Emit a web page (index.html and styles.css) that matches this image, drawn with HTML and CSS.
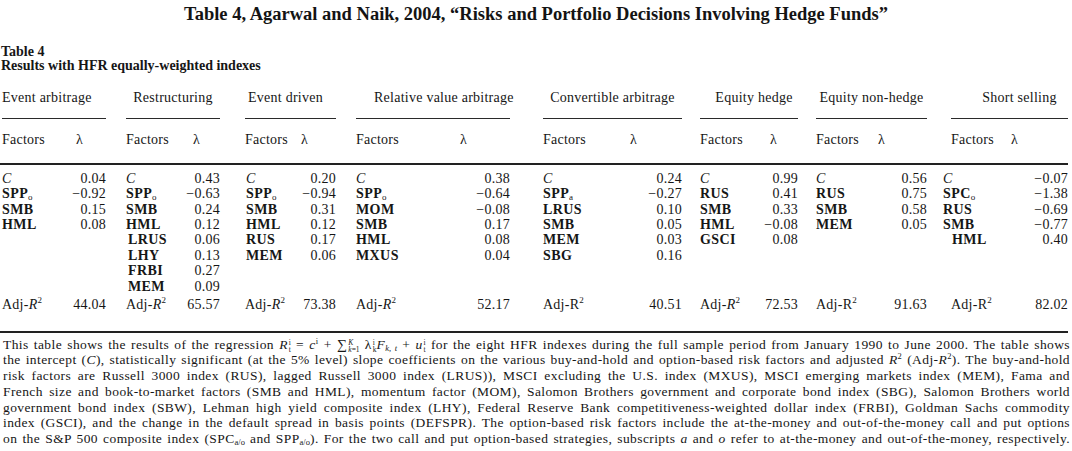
FILE: index.html
```html
<!DOCTYPE html>
<html lang="en">
<head>
<meta charset="utf-8">
<title>Table 4, Agarwal and Naik, 2004</title>
<link rel="stylesheet" href="styles.css">
</head>
<body>
<h1 class="title">Table 4, Agarwal and Naik, 2004, “Risks and Portfolio Decisions Involving Hedge Funds”</h1>

<div class="caption">
  <div>Table 4</div>
  <div>Results with HFR equally-weighted indexes</div>
</div>

<div class="table">
  <div class="group g1">
    <div class="head"><span>Event arbitrage</span></div>
    <div class="fhead"><span class="fl">Factors</span><span class="lam">λ</span></div>
    <div class="body">
      <div class="r"><i class="c">C</i><span>0.04</span></div>
      <div class="r"><b>SPP<sub>o</sub></b><span>−0.92</span></div>
      <div class="r"><b>SMB</b><span>0.15</span></div>
      <div class="r"><b>HML</b><span>0.08</span></div>
    </div>
    <div class="adj"><span>Adj-<i>R</i><sup>2</sup></span><span>44.04</span></div>
  </div>

  <div class="group g2">
    <div class="head"><span>Restructuring</span></div>
    <div class="fhead"><span class="fl">Factors</span><span class="lam">λ</span></div>
    <div class="body">
      <div class="r"><i class="c">C</i><span>0.43</span></div>
      <div class="r"><b>SPP<sub>o</sub></b><span>−0.63</span></div>
      <div class="r"><b>SMB</b><span>0.24</span></div>
      <div class="r"><b>HML</b><span>0.12</span></div>
      <div class="r"><b class="ind2">LRUS</b><span>0.06</span></div>
      <div class="r"><b class="ind2">LHY</b><span>0.13</span></div>
      <div class="r"><b class="ind2">FRBI</b><span>0.27</span></div>
      <div class="r"><b class="ind2">MEM</b><span>0.09</span></div>
    </div>
    <div class="adj"><span>Adj-<i>R</i><sup>2</sup></span><span>65.57</span></div>
  </div>

  <div class="group g3">
    <div class="head"><span>Event driven</span></div>
    <div class="fhead"><span class="fl">Factors</span><span class="lam">λ</span></div>
    <div class="body">
      <div class="r"><i class="c">C</i><span>0.20</span></div>
      <div class="r"><b>SPP<sub>o</sub></b><span>−0.94</span></div>
      <div class="r"><b>SMB</b><span>0.31</span></div>
      <div class="r"><b>HML</b><span>0.12</span></div>
      <div class="r"><b>RUS</b><span>0.17</span></div>
      <div class="r"><b>MEM</b><span>0.06</span></div>
    </div>
    <div class="adj"><span>Adj-<i>R</i><sup>2</sup></span><span>73.38</span></div>
  </div>

  <div class="group g4">
    <div class="head"><span>Relative value arbitrage</span></div>
    <div class="fhead"><span class="fl">Factors</span><span class="lam">λ</span></div>
    <div class="body">
      <div class="r"><i class="c">C</i><span>0.38</span></div>
      <div class="r"><b>SPP<sub>o</sub></b><span>−0.64</span></div>
      <div class="r"><b>MOM</b><span>−0.08</span></div>
      <div class="r"><b>SMB</b><span>0.17</span></div>
      <div class="r"><b>HML</b><span>0.08</span></div>
      <div class="r"><b>MXUS</b><span>0.04</span></div>
    </div>
    <div class="adj"><span>Adj-<i>R</i><sup>2</sup></span><span>52.17</span></div>
  </div>

  <div class="group g5">
    <div class="head"><span>Convertible arbitrage</span></div>
    <div class="fhead"><span class="fl">Factors</span><span class="lam">λ</span></div>
    <div class="body">
      <div class="r"><i class="c">C</i><span>0.24</span></div>
      <div class="r"><b>SPP<sub>a</sub></b><span>−0.27</span></div>
      <div class="r"><b>LRUS</b><span>0.10</span></div>
      <div class="r"><b>SMB</b><span>0.05</span></div>
      <div class="r"><b>MEM</b><span>0.03</span></div>
      <div class="r"><b>SBG</b><span>0.16</span></div>
    </div>
    <div class="adj"><span>Adj-R<sup>2</sup></span><span>40.51</span></div>
  </div>

  <div class="group g6">
    <div class="head"><span>Equity hedge</span></div>
    <div class="fhead"><span class="fl">Factors</span><span class="lam">λ</span></div>
    <div class="body">
      <div class="r"><i class="c">C</i><span>0.99</span></div>
      <div class="r"><b>RUS</b><span>0.41</span></div>
      <div class="r"><b>SMB</b><span>0.33</span></div>
      <div class="r"><b>HML</b><span>−0.08</span></div>
      <div class="r"><b>GSCI</b><span>0.08</span></div>
    </div>
    <div class="adj"><span>Adj-<i>R</i><sup>2</sup></span><span>72.53</span></div>
  </div>

  <div class="group g7">
    <div class="head"><span>Equity non-hedge</span></div>
    <div class="fhead"><span class="fl">Factors</span><span class="lam">λ</span></div>
    <div class="body">
      <div class="r"><i class="c">C</i><span>0.56</span></div>
      <div class="r"><b>RUS</b><span>0.75</span></div>
      <div class="r"><b>SMB</b><span>0.58</span></div>
      <div class="r"><b>MEM</b><span>0.05</span></div>
    </div>
    <div class="adj"><span>Adj-R<sup>2</sup></span><span>91.63</span></div>
  </div>

  <div class="group g8">
    <div class="head"><span>Short selling</span></div>
    <div class="fhead"><span class="fl">Factors</span><span class="lam">λ</span></div>
    <div class="body">
      <div class="r"><i class="c">C</i><span>−0.07</span></div>
      <div class="r"><b>SPC<sub>o</sub></b><span>−1.38</span></div>
      <div class="r"><b>RUS</b><span>−0.69</span></div>
      <div class="r"><b>SMB</b><span>−0.77</span></div>
      <div class="r"><b class="ind">HML</b><span>0.40</span></div>
    </div>
    <div class="adj"><span>Adj-R<sup>2</sup></span><span>82.02</span></div>
  </div>
</div>

<div class="notes">
  <p class="ln">This table shows the results of the regression <i>R</i><span class="ss"><span>i</span><span>t</span></span> = <i>c</i><sup class="up">i</sup> + <span class="sum">∑</span><span class="ss"><span><i>K</i></span><span><i>k</i>=1</span></span> λ<span class="ss"><span>i</span><span>k</span></span><i>F</i><sub class="dn"><i>k</i>, <i>t</i></sub> + <i>u</i><span class="ss"><span>i</span><span>t</span></span> for the eight HFR indexes during the full sample period from January 1990 to June 2000. The table shows</p>
  <p class="ln">the intercept (<i>C</i>), statistically significant (at the 5% level) slope coefficients on the various buy-and-hold and option-based risk factors and adjusted <i>R</i><sup class="up">2</sup> (Adj-<i>R</i><sup class="up">2</sup>). The buy-and-hold</p>
  <p class="ln">risk factors are Russell 3000 index (RUS), lagged Russell 3000 index (LRUS)), MSCI excluding the U.S. index (MXUS), MSCI emerging markets index (MEM), Fama and</p>
  <p class="ln">French size and book-to-market factors (SMB and HML), momentum factor (MOM), Salomon Brothers government and corporate bond index (SBG), Salomon Brothers world</p>
  <p class="ln">government bond index (SBW), Lehman high yield composite index (LHY), Federal Reserve Bank competitiveness-weighted dollar index (FRBI), Goldman Sachs commodity</p>
  <p class="ln">index (GSCI), and the change in the default spread in basis points (DEFSPR). The option-based risk factors include the at-the-money and out-of-the-money call and put options</p>
  <p class="ln">on the S&amp;P 500 composite index (SPC<sub class="dn">a/o</sub> and SPP<sub class="dn">a/o</sub>). For the two call and put option-based strategies, subscripts <i>a</i> and <i>o</i> refer to at-the-money and out-of-the-money, respectively.</p>
</div>
</body>
</html>
```

FILE: styles.css
```css
* { box-sizing: border-box; }

html, body {
  margin: 0;
  padding: 0;
  background: #ffffff;
}

body {
  width: 1072px;
  height: 451px;
  overflow: hidden;
  font-family: "Liberation Serif", "Times New Roman", serif;
  color: #161616;
}

.title {
  margin: 3px 0 0;
  font-size: 18.5px;
  line-height: 22px;
  font-weight: bold;
  text-align: center;
  color: #141414;
}

.caption {
  margin: 20px 0 0 1px;
  font-size: 14px;
  line-height: 14px;
  font-weight: bold;
}

/* ---------- table ---------- */
.table {
  display: flex;
  margin-top: 15.5px;
  font-size: 14px;
  letter-spacing: 0.25px;
}

.group {
  display: flex;
  flex-direction: column;
  width: var(--w);
}

.g1 { --w: 106px; --pl: 2px;  --bl: 2px;  --lam: 74px;  --hl: 0px;  --hr: 16px; }
.g2 { --w: 114px; --pl: 20px; --bl: 20px; --lam: 67px;  --hl: 0px;  --hr: 0px; }
.g3 { --w: 116px; --pl: 25px; --bl: 26px; --lam: 56px;  --hl: 0px;  --hr: 10px; }
.g4 { --w: 174px; --pl: 20px; --bl: 20px; --lam: 104px; --hl: 18px; --hr: 0px; }
.g5 { --w: 172px; --pl: 33px; --bl: 33px; --lam: 87px;  --hl: 0px;  --hr: 0px; }
.g6 { --w: 116px; --pl: 18px; --bl: 18px; --lam: 70px;  --hl: 10px; --hr: 0px; }
.g7 { --w: 129px; --pl: 18px; --bl: 18px; --lam: 62px;  --hl: 0px;  --hr: 0px; }
.g8 { --w: 141px; --pl: 24px; --bl: 16px; --lam: 60px;  --hl: 20px; --hr: 0px; }

.head {
  padding-left: var(--pl);
}

.head span {
  display: block;
  text-align: center;
  line-height: 17px;
  padding: 0 var(--hr) 12.5px var(--hl);
  border-bottom: 1.5px solid #2a2a2a;
  white-space: nowrap;
}

.fhead {
  display: flex;
  padding-left: var(--pl);
  margin-top: 12px;
  line-height: 17px;
  padding-bottom: 14.5px;
  border-bottom: 2px solid #222;
}

.fhead .fl {
  width: var(--lam);
  flex: none;
}

.body {
  height: 129.5px;
  padding-top: 6.3px;
  padding-left: var(--bl);
}

.r {
  display: flex;
  justify-content: space-between;
  line-height: 15.4px;
  height: 15.4px;
  white-space: nowrap;
}

.r b {
  font-weight: bold;
  letter-spacing: 0.4px;
}

.r b.ind { margin-left: 9px; }
.r b.ind2 { margin-left: 2px; }

.r sub, .adj sup {
  font-size: 9px;
  line-height: 0;
}

.r sub { vertical-align: -2px; font-weight: normal; }

.adj {
  display: flex;
  justify-content: space-between;
  padding-left: var(--pl);
  margin-top: 2px;
  line-height: 17px;
  padding-bottom: 17.5px;
  border-bottom: 2px solid #222;
  white-space: nowrap;
}

.adj sup { vertical-align: 6px; }

/* ---------- notes ---------- */
.notes {
  padding: 4px 2px 0 3px;
  font-size: 13.5px;
  letter-spacing: 0.4px;
}

.ln {
  margin: 0;
  line-height: 15.8px;
  height: 15.8px;
  text-align: justify;
  text-align-last: justify;
  white-space: nowrap;
}

.ss {
  display: inline-flex;
  flex-direction: column;
  vertical-align: 4px;
  font-size: 7.5px;
  line-height: 7px;
  margin-left: 1px;
  letter-spacing: 0;
}

.up {
  font-size: 8.5px;
  line-height: 0;
  vertical-align: 5px;
}

.dn {
  font-size: 8.5px;
  line-height: 0;
  vertical-align: -2px;
  letter-spacing: 0;
}

.sum {
  font-size: 14px;
}
```
